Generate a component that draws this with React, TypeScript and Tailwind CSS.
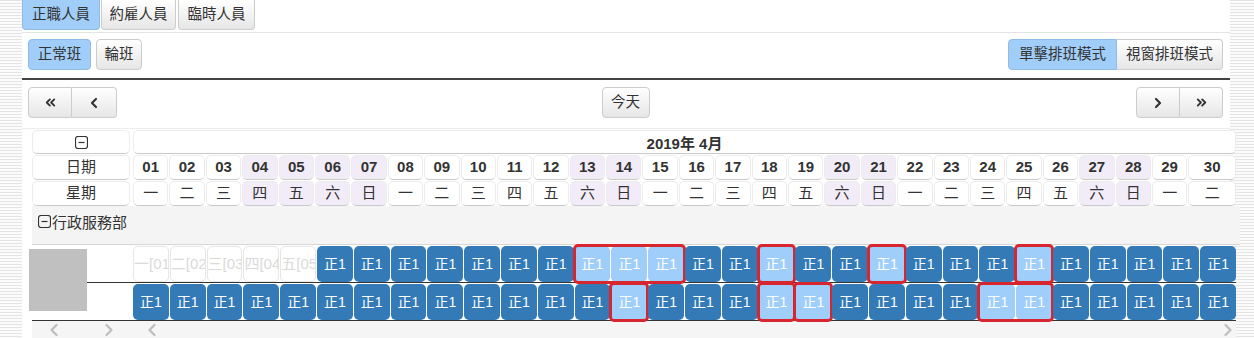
import { ChevronLeft, ChevronRight, ChevronsLeft, ChevronsRight } from "lucide-react";

// 週一到週日
const weekNames = ["一", "二", "三", "四", "五", "六", "日"];
const days = Array.from({ length: 30 }, (_, i) => i + 1);
const offDays = [4, 5, 6, 7, 13, 14, 20, 21, 27, 28];

// 有紅框的排班 [起始日, 天數]
const row1Marks: [number, number][] = [[13, 3], [18, 1], [21, 1], [25, 1]];
const row2Marks: [number, number][] = [[14, 1], [18, 1], [19, 1], [24, 2]];

const spanClass: Record<number, string> = {
  1: "col-span-1 grid grid-cols-1",
  2: "col-span-2 grid grid-cols-2",
  3: "col-span-3 grid grid-cols-3",
};

const stripe =
  "bg-[image:repeating-linear-gradient(to_bottom,#e4e4e4_0px,#e4e4e4_1px,#fbfbfb_1px,#fbfbfb_3px)]";

function Btn({ active, className = "", children }: { active?: boolean; className?: string; children: React.ReactNode }) {
  return (
    <div
      className={`flex items-center justify-center border text-[14.5px] text-[#333] ${
        active ? "bg-[#a1cef9] border-[#8fbbe4]" : "bg-linear-to-b from-white to-[#e6e6e6] border-[#cccccc]"
      } ${className}`}
    >
      {children}
    </div>
  );
}

function MinusBox() {
  return (
    <svg width="13" height="13" viewBox="0 0 13 13">
      <rect x="0.5" y="0.5" width="12" height="12" rx="2.5" fill="none" stroke="#333" strokeWidth="1.2" />
      <line x1="3.5" y1="6.5" x2="9.5" y2="6.5" stroke="#333" strokeWidth="1.2" />
    </svg>
  );
}

function HeadCell({ off, className = "", children }: { off?: boolean; className?: string; children?: React.ReactNode }) {
  return (
    <div
      className={`flex items-center justify-center rounded-[5px] border border-[#ececec] border-b-[#c9c9c9] ${
        off ? "bg-[#f2ecf8]" : "bg-white"
      } ${className}`}
    >
      {children}
    </div>
  );
}

function Shift({ light }: { light?: boolean }) {
  return (
    <div
      className={`flex h-[36px] items-center justify-center rounded-[5px] text-[14px] text-white ${
        light ? "bg-[#a0cefa]" : "bg-[#337ab7]"
      }`}
    >
      正1
    </div>
  );
}

function ShiftRow({ marks, empty = 0 }: { marks: [number, number][]; empty?: number }) {
  const items: React.ReactNode[] = [];
  let d = 1;
  while (d <= 30) {
    const m = marks.find((x) => x[0] === d);
    if (m) {
      items.push(
        <div key={d} className={`${spanClass[m[1]]} gap-px rounded-[3px] outline-[3px] -outline-offset-1 outline-[#d7262f]`}>
          {Array.from({ length: m[1] }, (_, k) => (
            <Shift key={k} light />
          ))}
        </div>
      );
      d += m[1];
    } else if (d <= empty) {
      items.push(
        <div
          key={d}
          className="flex h-[36px] items-center overflow-hidden whitespace-nowrap rounded-[5px] border border-[#e6e6e6] bg-white text-[15px] text-[#dadada]"
        >
          {weekNames[(d - 1) % 7]}[{String(d).padStart(2, "0")}]
        </div>
      );
      d += 1;
    } else {
      items.push(<Shift key={d} />);
      d += 1;
    }
  }
  return <div className="grid w-[1103px] grid-cols-[repeat(30,minmax(0,1fr))] gap-px pt-px">{items}</div>;
}

export default function App() {
  return (
    <div className={`flex h-[338px] w-[1254px] overflow-hidden ${stripe} font-[family-name:'Liberation_Sans','Noto_Sans_CJK_TC',sans-serif] text-[#333]`}>
      <div className="ml-[22px] flex w-[1208px] flex-col bg-white">
        {/* 人員類別 */}
        <div className="flex h-[30px] gap-px">
          <Btn active className="w-[78px] rounded-b-[4px] border-t-0">正職人員</Btn>
          <Btn className="w-[75px] rounded-b-[4px] border-t-0">約雇人員</Btn>
          <Btn className="ml-px w-[77px] rounded-b-[4px] border-t-0">臨時人員</Btn>
        </div>

        {/* 班別 / 模式 */}
        <div className="mt-[2px] flex items-center justify-between border-t border-b-2 border-t-[#e4e4e4] border-b-[#444] pt-[6px] pb-[8px]">
          <div className="ml-[6px] flex gap-[5px]">
            <Btn active className="h-[31px] w-[63px] rounded-[4px]">正常班</Btn>
            <Btn className="h-[31px] w-[46px] rounded-[4px]">輪班</Btn>
          </div>
          <div className="mr-[7px] flex">
            <Btn active className="h-[31px] w-[109px] rounded-l-[4px]">單擊排班模式</Btn>
            <Btn className="h-[31px] w-[106px] rounded-r-[4px] border-l-0">視窗排班模式</Btn>
          </div>
        </div>

        {/* 翻頁 */}
        <div className="flex items-center border-b border-[#ececec] pt-[7px] pb-[10px]">
          <div className="ml-[6px] flex flex-1">
            <Btn className="h-[31px] w-[44px] rounded-l-[4px]">
              <ChevronsLeft size={15} strokeWidth={3} />
            </Btn>
            <Btn className="h-[31px] w-[45px] rounded-r-[4px] border-l-0">
              <ChevronLeft size={16} strokeWidth={3.2} />
            </Btn>
          </div>
          <Btn className="h-[31px] w-[48px] rounded-[4px]">今天</Btn>
          <div className="mr-[7px] flex flex-1 justify-end">
            <Btn className="h-[31px] w-[44px] rounded-l-[4px]">
              <ChevronRight size={16} strokeWidth={3.2} />
            </Btn>
            <Btn className="h-[31px] w-[43px] rounded-r-[4px] border-l-0">
              <ChevronsRight size={15} strokeWidth={3} />
            </Btn>
          </div>
        </div>

        {/* 排班表 */}
        <div className="mt-px pl-[10px]">
          <div className="flex w-[1204px] gap-[3px]">
            <div className="flex w-[98px] flex-col gap-px">
              <HeadCell className="h-[24px]">
                <MinusBox />
              </HeadCell>
              <HeadCell className="h-[25px] text-[15px]">日期</HeadCell>
              <HeadCell className="h-[25px] text-[15px]">星期</HeadCell>
            </div>
            <div className="flex w-[1103px] flex-col gap-px">
              <HeadCell className="h-[24px] pt-[4px] text-[15px] font-bold">2019年 4月</HeadCell>
              <div className="grid grid-cols-[repeat(29,35.4px)_1fr] gap-x-px">
                {days.map((d) => (
                  <HeadCell key={d} off={offDays.includes(d)} className="h-[25px] text-[15px] font-bold">
                    {String(d).padStart(2, "0")}
                  </HeadCell>
                ))}
              </div>
              <div className="grid grid-cols-[repeat(29,35.4px)_1fr] gap-x-px">
                {days.map((d) => (
                  <HeadCell key={d} off={offDays.includes(d)} className="h-[25px] text-[15px]">
                    {weekNames[(d - 1) % 7]}
                  </HeadCell>
                ))}
              </div>
            </div>
          </div>

          {/* 部門 */}
          <div className="flex h-[39px] w-[1208px] items-start gap-[1px] border-b border-[#d6d6d6] bg-[#f4f4f4] pt-[6px] pl-[6px] text-[15px]">
            <span className="mt-[3px]">
              <MinusBox />
            </span>
            <span>行政服務部</span>
          </div>

          <div className="flex w-[1204px] border-b border-[#333]">
            <div className="w-[55px]">
              <div className="mt-[4px] ml-[-3px] h-[62px] w-[58px] bg-[#c0c0c0]" />
            </div>
            <div className="flex flex-col">
              <div className="flex h-[38px] border-b border-[#333]">
                <div className="w-[46px]" />
                <ShiftRow marks={row1Marks} empty={5} />
              </div>
              <div className="flex h-[37px]">
                <div className="w-[46px]" />
                <ShiftRow marks={row2Marks} />
              </div>
            </div>
          </div>

          {/* 捲軸 */}
          <div className="flex h-[17px] w-[1204px] items-center bg-[#f5f5f5] text-[#bdbdbd]">
            <ChevronLeft size={20} strokeWidth={2.6} className="ml-[12px]" />
            <ChevronRight size={20} strokeWidth={2.6} className="ml-[35px]" />
            <ChevronLeft size={20} strokeWidth={2.6} className="ml-[23px]" />
            <ChevronRight size={20} strokeWidth={2.6} className="mr-[-2px] ml-auto" />
          </div>
        </div>
      </div>
    </div>
  );
}
